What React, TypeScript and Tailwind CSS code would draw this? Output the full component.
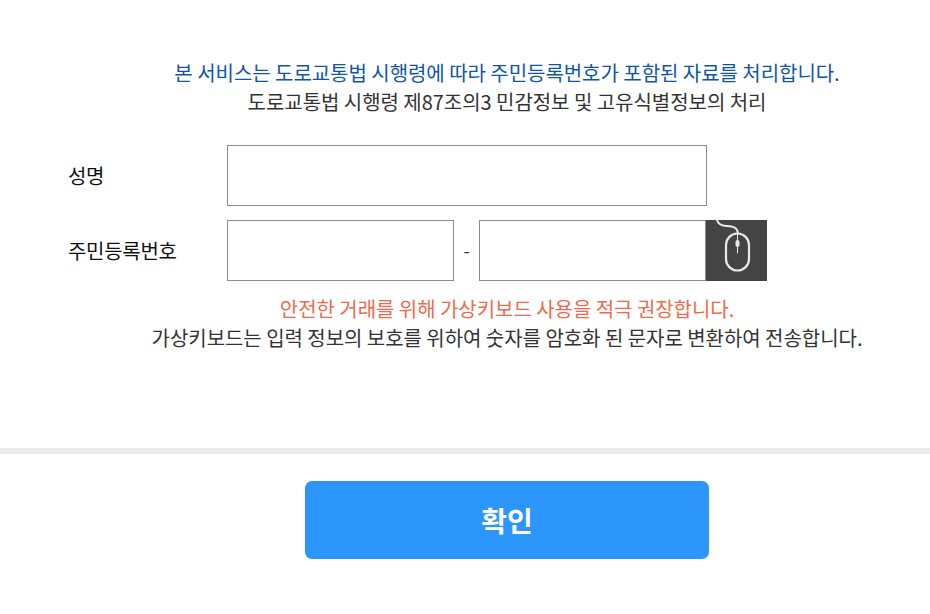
import React from 'react';

const font = { fontFamily: '"Noto Sans CJK KR", sans-serif' };

const MouseIcon = () => (
  <svg width="61" height="61" viewBox="0 0 61 61" fill="none" stroke="#e8e8e8" strokeLinecap="round">
    <path d="M11 0 C12 4 15 5.5 20 6 C26 6.5 31 6.5 32 13" strokeWidth="2" />
    <rect x="20" y="13.5" width="23" height="37" rx="11.5" strokeWidth="2.2" />
    <path d="M31.5 14 V33" strokeWidth="1" />
    <rect x="29.5" y="20" width="4" height="7" rx="2" fill="#e8e8e8" stroke="none" />
  </svg>
);

export default function App() {
  return (
    <div className="w-[930px] h-[614px] bg-white overflow-hidden" style={font}>
      <div className="h-[448px] pt-[58px]">
        <div className="pl-[84px] text-center text-[20px] leading-[29px] tracking-[-0.04px]">
          <p className="text-[#0f56a8]">본 서비스는 도로교통법 시행령에 따라 주민등록번호가 포함된 자료를 처리합니다.</p>
          <p className="text-[#333333]">도로교통법 시행령 제87조의3 민감정보 및 고유식별정보의 처리</p>
        </div>

        <div className="mt-[29px] flex items-center">
          <label className="w-[227px] pl-[68px] text-[20px] tracking-[-0.3px] text-[#111111]">성명</label>
          <input className="w-[480px] h-[61px] border border-[#8c8c8c] bg-white" />
        </div>

        <div className="mt-[14px] flex items-center">
          <label className="w-[227px] pl-[68px] text-[20px] tracking-[-0.3px] text-[#111111]">주민등록번호</label>
          <input className="w-[227px] h-[61px] border border-[#8c8c8c] bg-white" />
          <span className="w-[25px] text-center text-[18px] text-[#333333]">-</span>
          <input className="w-[227px] h-[61px] border border-[#8c8c8c] bg-white" />
          <button className="w-[61px] h-[61px] bg-[#444444]">
            <MouseIcon />
          </button>
        </div>

        <div className="mt-[13px] pl-[84px] text-center text-[20px] leading-[29px] tracking-[-0.04px]">
          <p className="text-[#ef6a4c]">안전한 거래를 위해 가상키보드 사용을 적극 권장합니다.</p>
          <p className="text-[#333333]">가상키보드는 입력 정보의 보호를 위하여 숫자를 암호화 된 문자로 변환하여 전송합니다.</p>
        </div>
      </div>

      <div className="h-[6px] bg-[#ebebeb]" />

      <div className="pt-[27px] pl-[305px]">
        <button className="w-[404px] h-[78px] rounded-[7px] bg-[#2d96fb] text-white text-[28px] font-bold">
          확인
        </button>
      </div>
    </div>
  );
}
